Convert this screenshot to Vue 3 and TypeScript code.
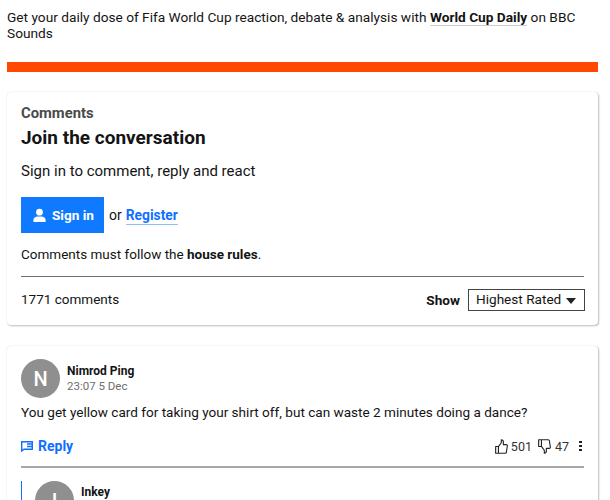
<script setup lang="ts">
const votes = { up: 501, down: 47 }
</script>

<template>
  <main class="page">
    <p class="promo">
      Get your daily dose of Fifa World Cup reaction, debate &amp; analysis with
      <a class="promo-link">World Cup Daily</a> on BBC Sounds
    </p>
    <div class="bar"></div>

    <section class="card join">
      <div class="eyebrow">Comments</div>
      <h2 class="title">Join the conversation</h2>
      <p class="lead">Sign in to comment, reply and react</p>
      <div class="auth">
        <button class="signin">
          <svg class="user" viewBox="0 0 16 16" width="15" height="15">
            <circle cx="8" cy="4.4" r="3.6" fill="#fff" />
            <path d="M1.500 15v-2.200C1.500 10.500 3.500 9 6 9h4c2.500 0 4.500 1.500 4.500 3.800V15z" fill="#fff" />
          </svg>
          Sign in
        </button>
        <span class="or">or</span>
        <a class="register">Register</a>
      </div>
      <p class="rules">Comments must follow the <b>house rules</b>.</p>
      <div class="toolbar">
        <span class="count">1771 comments</span>
        <div class="sort">
          <b class="show">Show</b>
          <div class="select">
            Highest Rated
            <span class="caret"></span>
          </div>
        </div>
      </div>
    </section>

    <section class="card thread">
      <div class="author">
        <div class="avatar">N</div>
        <div>
          <div class="name">Nimrod Ping</div>
          <div class="time">23:07 5 Dec</div>
        </div>
      </div>
      <p class="body">You get yellow card for taking your shirt off, but can waste 2 minutes doing a dance?</p>
      <div class="actions">
        <a class="reply">
          <svg viewBox="0 0 12 12" width="12" height="12">
            <path d="M.7 1.700h10.600v7.600H3L.7 11z" fill="none" stroke="#0f6fff" stroke-width="1.400" />
            <path d="M6 4h5M6 6.500h5" stroke="#0f6fff" stroke-width="1.400" />
          </svg>
          Reply
        </a>
        <div class="votes">
          <svg viewBox="0 0 14 16" width="13" height="15" class="thumb">
            <path d="M.7 8h3v7.300h-3zM3.700 8.200 6.800 4V.8c1.500 0 2.200 1 2.200 2.400V6h3.300c.7 0 1.100.6 1 1.200l-1 6.900c-.1.700-.6 1.200-1.300 1.200H3.700" fill="none" stroke="#222" stroke-width="1.200" stroke-linejoin="round" />
          </svg>
          <span class="up">{{ votes.up }}</span>
          <svg viewBox="0 0 14 16" width="13" height="15" class="thumb down">
            <path d="M.7 8h3v7.300h-3zM3.700 8.200 6.800 4V.8c1.500 0 2.200 1 2.200 2.400V6h3.300c.7 0 1.100.6 1 1.200l-1 6.900c-.1.700-.6 1.200-1.300 1.200H3.700" fill="none" stroke="#222" stroke-width="1.200" stroke-linejoin="round" />
          </svg>
          <span>{{ votes.down }}</span>
          <span class="more"><i></i><i></i><i></i></span>
        </div>
      </div>
      <div class="reply-item">
        <div class="author">
          <div class="avatar">I</div>
          <div class="name">Inkey</div>
        </div>
      </div>
    </section>
  </main>
</template>

<style scoped>
.page {
  padding: 0 12px 0 7px;
  height: 500px;
  box-sizing: border-box;
  overflow: hidden;
  font-family: Roboto, sans-serif;
  font-size: 14px;
  color: #141414;
  background: #fff;
}
.promo {
  margin: 0;
  padding-top: 9px;
  line-height: 16px;
  font-size: 13.7px;
}
.promo-link {
  font-weight: 700;
  border-bottom: 1px solid #ccc;
}
.bar {
  height: 10px;
  margin-top: 21px;
  background: #ff4900;
}
.card {
  border-radius: 4px;
  background: #fff;
  box-shadow: 1px 1px 2px rgba(0, 0, 0, 0.25), 0 0 1px rgba(0, 0, 0, 0.2);
  padding: 0 14px;
}
.join {
  margin-top: 20px;
  height: 233px;
  box-sizing: border-box;
  padding-top: 12px;
}
.eyebrow {
  font-size: 14.8px;
  font-weight: 700;
  line-height: 18px;
  color: #4a4a4a;
}
.title {
  margin: 4px 0 0;
  font-size: 19px;
  line-height: 24px;
  font-weight: 700;
}
.lead {
  margin: 11px 0 0;
  font-size: 15px;
  line-height: 20px;
}
.auth {
  display: flex;
  align-items: center;
  margin-top: 16px;
}
.signin {
  display: flex;
  align-items: center;
  gap: 5px;
  width: 83px;
  height: 36px;
  padding: 0 0 0 11px;
  border: none;
  background: #0f7aff;
  color: #fff;
  font: 700 13.6px Roboto, sans-serif;
}
.or {
  margin-left: 5px;
}
.register {
  margin: 2px 0 0 4px;
  font-weight: 700;
  font-size: 13.8px;
  color: #0f6fff;
  border-bottom: 1px solid #8cbcff;
  line-height: 17px;
}
.rules {
  margin: 12px 0 0;
  font-size: 13.5px;
  line-height: 18px;
}
.toolbar {
  display: flex;
  justify-content: space-between;
  align-items: center;
  margin-top: 13px;
  padding-top: 12px;
  border-top: 1px solid #6e6e6e;
}
.count {
  margin-bottom: 2px;
  font-size: 13.5px;
}
.sort {
  display: flex;
  align-items: center;
  gap: 8px;
  margin-right: -1px;
}
.show {
  font-size: 13.6px;
}
.select {
  display: flex;
  align-items: center;
  justify-content: space-between;
  width: 117px;
  height: 22px;
  box-sizing: border-box;
  padding: 0 8px 2px 7px;
  border: 1px solid #444;
  font-size: 13.6px;
}
.caret {
  width: 0;
  height: 0;
  margin-top: 4px;
  border-left: 5px solid transparent;
  border-right: 5px solid transparent;
  border-top: 6px solid #222;
}
.thread {
  margin-top: 21px;
  height: 180px;
  padding-top: 13px;
}
.author {
  display: flex;
  align-items: center;
  gap: 7px;
}
.avatar {
  display: flex;
  align-items: center;
  justify-content: center;
  width: 39px;
  height: 39px;
  border-radius: 50%;
  background: #8f8f8f;
  color: #fff;
  font-size: 20px;
  font-weight: 500;
}
.name {
  font-size: 12px;
  font-weight: 700;
  line-height: 15px;
}
.time {
  font-size: 11.5px;
  line-height: 15px;
  color: #6e6e6e;
}
.body {
  margin: 4px 0 0;
  font-size: 13.57px;
  line-height: 20px;
}
.actions {
  display: flex;
  justify-content: space-between;
  align-items: center;
  margin-top: 13px;
  height: 22px;
}
.reply {
  display: flex;
  align-items: center;
  gap: 5px;
  color: #0f6fff;
  font-weight: 700;
  font-size: 14px;
}
.votes {
  display: flex;
  align-items: center;
  font-size: 12.5px;
  color: #333;
}
.votes span {
  margin-left: 4px;
}
.votes .up {
  margin-left: 3px;
}
.thumb.down {
  margin-left: 6px;
  transform: rotate(180deg) scaleX(-1);
}
.votes .more {
  display: flex;
  flex-direction: column;
  gap: 1.500px;
  margin: 0 2px 0 10px;
}
.more i {
  width: 3px;
  height: 2.500px;
  background: #222;
}
.reply-item {
  margin-top: 9px;
  padding: 13px 0 0 14px;
  border-top: 2px solid #a8a8a8;
  position: relative;
}
.reply-item::before {
  content: "";
  position: absolute;
  left: 0;
  top: 13px;
  bottom: 0;
  width: 1px;
  background: #0f6fff;
}
.reply-item .name {
  margin-top: -17px;
}
</style>

<style>
html,
body {
  overflow: hidden;
  background: #fff;
}
</style>
